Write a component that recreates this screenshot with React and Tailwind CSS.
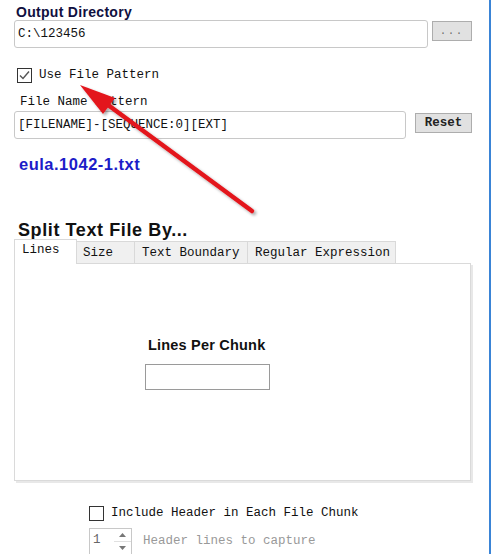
import React from "react";

const mono = { fontFamily: '"Liberation Mono", "DejaVu Sans Mono", monospace' };
const sans = { fontFamily: '"Liberation Sans", Arial, sans-serif' };

function Check({ checked }) {
  return (
    <div className="w-[15px] h-[15px] border border-[#333] bg-white flex items-center justify-center shrink-0">
      {checked && (
        <svg width="13" height="13" viewBox="0 0 13 13">
          <path d="M2 6.5 L5 9.5 L11 2.5" fill="none" stroke="#555" strokeWidth="1.4" />
        </svg>
      )}
    </div>
  );
}

export default function App() {
  return (
    <div className="relative w-[495px] h-[554px] overflow-hidden bg-white text-[#111]">
      <div className="w-[491px] h-full border-r-2 border-[#3a84d6] pl-[14px]">
        <div className="pt-[4px] pl-[2px] text-[14px] leading-[16px] font-bold text-[#101040] tracking-[0.3px]" style={sans}>
          Output Directory
        </div>
        <div className="flex items-start">
          <div className="w-[414px] h-[28px] border border-[#c8c8c8] rounded-[3px] flex items-center pl-[3px] text-[12.5px]" style={mono}>
            C:\123456
          </div>
          <div className="ml-[4px] mt-[1px] w-[40px] h-[20px] border border-[#adadad] bg-[#e1e1e1] flex items-center justify-center text-[10px] text-[#666] tracking-[2px]" style={mono}>
            ...
          </div>
        </div>
        <div className="mt-[20px] pl-[3px] flex items-center gap-[7px] h-[15px]">
          <Check checked />
          <span className="text-[12.5px] leading-[15px]" style={mono}>Use File Pattern</span>
        </div>
        <div className="mt-[12px] pl-[6px] text-[12.5px] leading-[15px]" style={mono}>File Name Pattern</div>
        <div className="mt-[1px] flex items-start">
          <div className="w-[392px] h-[28px] border border-[#c8c8c8] rounded-[3px] flex items-center pl-[3px] text-[12.5px]" style={mono}>
            [FILENAME]-[SEQUENCE:0][EXT]
          </div>
          <div className="ml-[9px] mt-[2px] w-[57px] h-[20px] border border-[#adadad] bg-[#e1e1e1] flex items-center justify-center text-[12.5px] font-bold text-[#222]" style={mono}>
            Reset
          </div>
        </div>
        <div className="mt-[16px] pl-[5px] text-[16.5px] leading-[18px] font-bold text-[#1c1cc8] tracking-[0.5px]" style={sans}>
          eula.1042-1.txt
        </div>
        <div className="mt-[47px] pl-[4px] text-[18px] leading-[20px] font-bold text-[#111] tracking-[0.6px]" style={sans}>
          Split Text File By...
        </div>
        <div className="flex items-end h-[24px] text-[12.5px] relative z-10" style={mono}>
          <div className="w-[63px] h-[25px] border border-b-0 border-[#d9d9d9] bg-white pl-[7px] pt-[3px] leading-[15px]">Lines</div>
          <div className="w-[58px] h-[23px] border border-l-0 border-[#d9d9d9] bg-[#f0f0f0] pl-[6px] pt-[4px] leading-[15px]">Size</div>
          <div className="w-[113px] h-[23px] border border-l-0 border-[#d9d9d9] bg-[#f0f0f0] pl-[7px] pt-[4px] leading-[15px]">Text Boundary</div>
          <div className="w-[148px] h-[23px] border border-l-0 border-[#d9d9d9] bg-[#f0f0f0] pl-[7px] pt-[4px] leading-[15px]">Regular Expression</div>
        </div>
        <div className="-mt-px w-[457px] h-[218px] border border-[#dadada] bg-white shadow-[2px_2px_0_#e8e8e8] flex flex-col items-start">
          <div className="mt-[73px] ml-[133px] text-[14.5px] leading-[16px] font-bold text-[#111] tracking-[0.2px]" style={sans}>
            Lines Per Chunk
          </div>
          <div className="mt-[11px] ml-[130px] w-[125px] h-[26px] border border-[#9a9a9a] bg-white" />
        </div>
        <div className="mt-[25px] ml-[75px] flex items-center gap-[7px] h-[15px]">
          <Check />
          <span className="text-[12.5px] leading-[15px]" style={mono}>Include Header in Each File Chunk</span>
        </div>
        <div className="mt-[7px] ml-[75px] flex items-center">
          <div className="w-[43px] h-[27px] border border-[#c8c8c8] flex items-stretch">
            <div className="flex-1 pl-[3px] pt-[4px] text-[12.5px] leading-[15px] text-[#666]" style={mono}>1</div>
            <div className="w-[17px] flex flex-col">
              <div className="flex-1 flex items-center justify-center border-b border-[#e0e0e0]">
                <svg width="7" height="4" viewBox="0 0 7 4"><path d="M0 4 L3.5 0 L7 4 Z" fill="#777" /></svg>
              </div>
              <div className="flex-1 flex items-center justify-center">
                <svg width="7" height="4" viewBox="0 0 7 4"><path d="M0 0 L3.5 4 L7 0 Z" fill="#777" /></svg>
              </div>
            </div>
          </div>
          <span className="ml-[11px] text-[12.5px] leading-[15px] text-[#999]" style={mono}>Header lines to capture</span>
        </div>
      </div>
      <svg className="absolute left-0 top-0 pointer-events-none" width="495" height="554" viewBox="0 0 495 554">
        <defs>
          <filter id="sh" x="-20%" y="-20%" width="140%" height="140%">
            <feDropShadow dx="2" dy="2" stdDeviation="1.5" floodColor="#000" floodOpacity="0.35" />
          </filter>
        </defs>
        <g filter="url(#sh)">
          <line x1="252" y1="211" x2="104" y2="102" stroke="#e3141b" strokeWidth="4.5" strokeLinecap="round" />
          <polygon points="80,85 115,98 103,114" fill="#e3141b" />
        </g>
      </svg>
    </div>
  );
}
